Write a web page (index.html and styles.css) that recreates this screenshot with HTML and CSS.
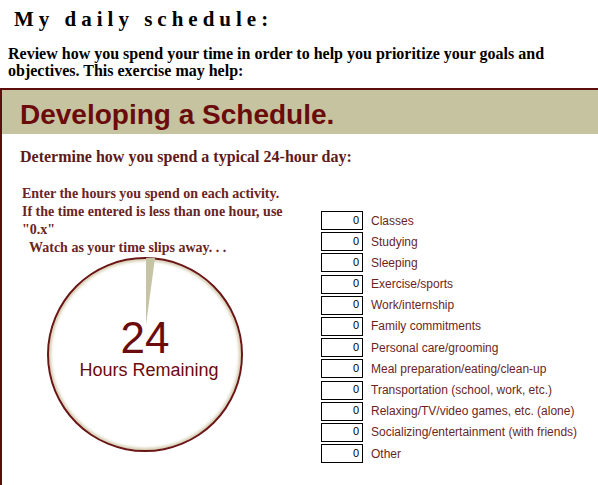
FILE: index.html
```html
<!DOCTYPE html>
<html lang="en">
<head>
    <meta charset="UTF-8">
    <title>My daily schedule</title>
    <link rel="stylesheet" href="styles.css">
</head>
<body>

<h1 class="page-title">My daily schedule:</h1>
<p class="intro">Review how you spend your time in order to help you prioritize your goals and objectives. This exercise may help:</p>

<div class="schedule-box">
    <div class="band">
        <h2>Developing a Schedule.</h2>
    </div>
    <p class="question">Determine how you spend a typical 24-hour day:</p>

    <div class="schedule-body">
        <div class="left-col">
            <p class="hint">Enter the hours you spend on each activity.<br>If the time entered is less than one hour, use "0.x"</p>
            <p class="hint watch">Watch as your time slips away. . .</p>
            <div class="dial">
                <!-- the slice of used time -->
                <svg class="wedge" width="195" height="195" viewBox="0 0 195 195">
                    <polygon points="99,1 108,1 99,68" fill="#c6c4a4"/>
                </svg>
                <span class="dial-num" id="remaining">24</span>
                <span class="dial-label">Hours Remaining</span>
            </div>
        </div>

        <div class="activities">
            <div class="activity"><input type="text" value="0"><label>Classes</label></div>
            <div class="activity"><input type="text" value="0"><label>Studying</label></div>
            <div class="activity"><input type="text" value="0"><label>Sleeping</label></div>
            <div class="activity"><input type="text" value="0"><label>Exercise/sports</label></div>
            <div class="activity"><input type="text" value="0"><label>Work/internship</label></div>
            <div class="activity"><input type="text" value="0"><label>Family commitments</label></div>
            <div class="activity"><input type="text" value="0"><label>Personal care/grooming</label></div>
            <div class="activity"><input type="text" value="0"><label>Meal preparation/eating/clean-up</label></div>
            <div class="activity"><input type="text" value="0"><label>Transportation (school, work, etc.)</label></div>
            <div class="activity"><input type="text" value="0"><label>Relaxing/TV/video games, etc. (alone)</label></div>
            <div class="activity"><input type="text" value="0"><label>Socializing/entertainment (with friends)</label></div>
            <div class="activity"><input type="text" value="0"><label>Other</label></div>
        </div>
    </div>
</div>

</body>
</html>
```

FILE: styles.css
```css
* {
    box-sizing: border-box;
}
body {
    margin: 0;
    padding: 0;
    background-color: #fff;
    font-family: 'Liberation Serif', 'Times New Roman', serif;
    color: #000;
    overflow: hidden;
}
.page-title {
    font-size: 21px;
    font-weight: bold;
    letter-spacing: 5px;
    margin: 0;
    padding: 7px 0 0 14px;
    line-height: 24px;
}
.intro {
    font-size: 16px;
    font-weight: bold;
    line-height: 17px;
    margin: 14px 0 0 0;
    padding: 0 40px 0 8px;
}
.schedule-box {
    margin-top: 9px;
    border-top: 2px solid #5e0d0d;
    border-left: 2px solid #5e0d0d;
    height: 420px;
}
.band {
    background-color: #c5c3a0;
    height: 44px;
    padding-left: 18px;
}
.band h2 {
    margin: 0;
    font-family: 'Liberation Sans', Arial, sans-serif;
    font-size: 28px;
    font-weight: bold;
    color: #6b0b0b;
    line-height: 50px;
}
.question {
    margin: 14px 0 0 18px;
    font-size: 16px;
    font-weight: bold;
    line-height: 17px;
    color: #5e1a1a;
}
.schedule-body {
    display: flex;
    align-items: flex-start;
}
.left-col {
    width: 319px;
    padding-left: 20px;
    padding-top: 20px;
}
.hint {
    margin: 0;
    font-size: 14px;
    font-weight: bold;
    line-height: 18px;
    color: #6b2424;
    width: 270px;
}
.hint.watch {
    padding-left: 7px;
}
.dial {
    position: relative;
    width: 196px;
    height: 195px;
    margin-left: 25px;
    border: 2px solid #6b1515;
    border-radius: 50%;
    box-shadow: inset 0 0 3px 2px #d4cdb0;
    display: flex;
    flex-direction: column;
    align-items: center;
    justify-content: center;
    font-family: 'Liberation Sans', Arial, sans-serif;
    color: #6b0b0b;
}
.wedge {
    position: absolute;
    top: -2px;
    left: -2px;
}
.dial-num {
    position: relative;
    font-size: 44px;
    line-height: 40px;
    margin-top: -10px;
}
.dial-label {
    position: relative;
    font-size: 18px;
    line-height: 22px;
    margin-top: 1px;
    padding-left: 8px;
}
.activities {
    margin-top: 46px;
    display: flex;
    flex-direction: column;
    gap: 2.2px;
}
.activity {
    display: flex;
    align-items: center;
    height: 19px;
}
.activity input {
    width: 42px;
    height: 19px;
    border: 1px solid #000;
    padding: 0 3px 2px 0;
    margin: 0;
    text-align: right;
    font-family: 'Liberation Sans', Arial, sans-serif;
    font-size: 11px;
    color: #000;
    background: #fff;
}
.activity label {
    margin-left: 8px;
    font-family: 'Liberation Sans', Arial, sans-serif;
    font-size: 12px;
    color: #6b1f1f;
    white-space: nowrap;
}
```
